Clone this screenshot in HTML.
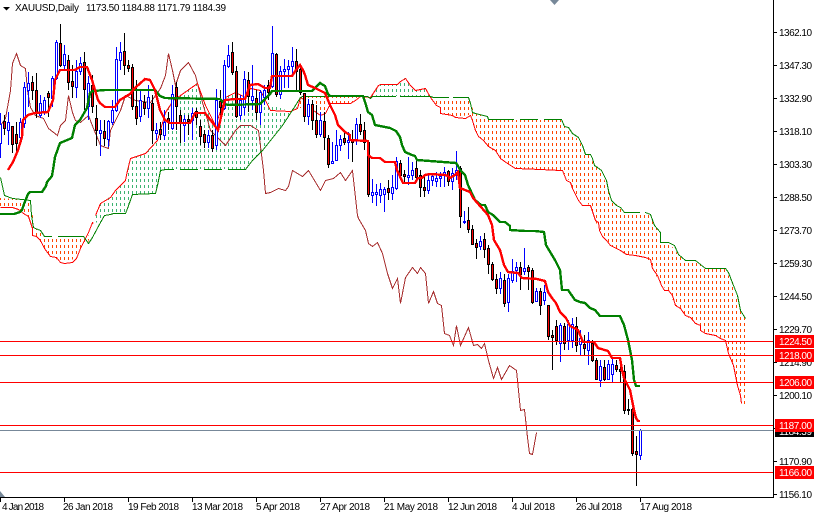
<!DOCTYPE html>
<html><head><meta charset="utf-8"><style>
html,body{margin:0;padding:0;background:#fff;width:814px;height:514px;overflow:hidden}
svg{display:block}
text{font-family:"Liberation Sans",sans-serif;font-size:10px;fill:#000}
.l{fill:none;shape-rendering:crispEdges}
.w{fill:#fff}
</style></head><body>
<svg width="814" height="514" viewBox="0 0 814 514" xmlns="http://www.w3.org/2000/svg">
<defs>
<pattern id="po" x="0" y="5" width="4" height="6" patternUnits="userSpaceOnUse"><rect x="0" y="0" width="1" height="3" fill="#ff4500"/></pattern>
<pattern id="pg" x="0" y="5" width="4" height="6" patternUnits="userSpaceOnUse"><rect x="0" y="0" width="1" height="3" fill="#3cb371"/></pattern>
</defs>
<rect width="814" height="514" fill="#fff"/>
<g shape-rendering="crispEdges">
<path fill="url(#po)" d="M0 198L30 200L35 228L44 236L83 236L88 243L93 223L88 237L76 258L64 263L50 256L44 248L36 236L32 228L28 216L18 209L0 207Z"/>
<path fill="url(#pg)" d="M93 223L95 215L100 203L110 197L125 180L127 170L130 158L145 153L157 140L165 112L173 100L197 83L205 105L215 125L225 97L235 92L245 97L250 88L260 90L270 105L290 111L297 108L295 105L282 125L270 140L262 150L248 165L245 169L165 169L160 170L157 185L155 193L132 194L127 208L125 213L110 214L104 215L100 222Z"/>
<path fill="url(#po)" d="M297 108L300 97L360 96L363 96L350 103L330 103L325 113L320 115L313 110L300 108Z"/>
<path fill="url(#pg)" d="M370 97L378 85L397 84L405 78L415 90L425 88L430 96L385 96Z"/>
<path fill="url(#po)" d="M433 97L468 97L470 103L475 113L487 116L488 119L561 119L564 126L572 133L582 145L585 154L590 154L594 165L601 170L608 190L611 200L620 207L624 212L645 212L650 214L654 225L660 232L660 242L668 242L678 254L685 260L695 260L705 268L725 268L733 285L740 310L745 318L745 405L741 403L737 385L733 365L725 340L715 335L705 333L695 323L685 315L675 305L668 290L661 285L652 268L645 257L626 254L610 245L599 230L595 220L590 205L578 200L570 182L562 170L515 168L500 158L488 146L478 136L470 115L455 117L440 113L440 107L436 105Z"/>
</g>
<g class="l" shape-rendering="crispEdges" transform="translate(.5 .5)">
<polyline fill="none" stroke="#a52a2a" stroke-width="1" points="0,125 5,118 10,90 12,63 16,53 20,65 25,68 27,90 30,107 35,115 43,118 48,128 57,135 60,125 65,120 68,95 72,112 75,120 80,122 88,115 93,128 98,140 100,145 108,148 110,130 115,120 120,110 125,95 135,100 150,102 155,95 160,88 165,75 168,53 172,70 175,85 180,70 188,62 195,75 200,95 210,130 220,140 225,145 235,130 240,125 250,125 258,130 263,170 265,193 270,192 278,188 285,190 288,186 292,170 297,173 302,176 308,170 320,190 325,180 333,178 340,172 345,180 352,170 355,197 357,215 358,218 365,230 368,243 372,246 377,242 382,253 387,273 392,288 397,278 400,303 405,277 412,267 417,273 420,267 425,273 428,303 433,291 437,303 441,305 444,333 449,335 453,345 456,325 460,345 468,327 473,345 477,344 481,348 484,343 488,360 493,378 497,367 501,379 509,365 516,370 518,390 520,410 524,409 527,437 529,453 532,454 536,432"/>
<polyline fill="none" stroke="#ff0000" stroke-width="1" points="0,207 12,207 18,209 23,213 28,216 30,222 32,228 32,235 36,236 40,240 44,248 50,256 56,257 60,262 64,263 72,262 76,258 80,248 84,240 88,232 92,222 93,223"/>
<polyline fill="none" stroke="#ff0000" stroke-width="1" points="95,215 100,203 105,200 110,197 115,190 120,185 125,180 127,170 130,158 145,153 157,140 165,112 173,100 197,83 205,105 215,125 225,97 235,92 245,97 250,88 260,90 270,110 290,111 297,108 300,97 305,100"/>
<polyline fill="none" stroke="#ff0000" stroke-width="1" points="313,110 320,115 325,113 330,103 350,103 355,100 360,96 370,97 378,85 380,84 397,84 400,81 405,78 410,85 415,90 425,88 430,97 436,105 440,107 440,113 452,115 455,117 465,118 470,115 472,120 475,130 478,136 483,140 488,146 495,150 500,158 507,163 515,168 540,169 560,170 562,170 566,180 570,182 572,188 578,200 582,205 590,205 595,220 598,222 599,230 602,236 606,240 610,245 620,250 626,254 635,255 645,257 650,259 652,268 657,275 661,285 664,290 668,290 672,295 675,305 680,308 685,315 690,317 695,323 700,325 700,330 705,333 715,335 720,338 725,340 728,353 733,365 735,375 737,385 740,395 741,403"/>
<polyline fill="none" stroke="#008000" stroke-width="1" points="0,177 4,195 12,198 30,200 31,215 33,227 35,228 40,230 44,236 83,236 88,243 92,237 93,235 100,222 104,215 110,214 113,213 125,213 127,208 132,194 155,193 157,185 160,170 165,169 245,169 248,165 252,160 262,150 270,140 282,125 295,105 300,97 302,96 360,96 367,96 370,98 372,96 430,96 433,97 468,97 470,103 472,112 475,113 487,116 488,119 561,119 564,126 568,127 572,133 578,137 582,145 585,154 590,154 592,158 594,165 597,167 601,170 606,180 608,190 611,200 616,205 620,207 624,212 645,212 650,214 654,225 660,232 660,242 668,242 674,245 678,254 685,260 695,260 705,268 725,268 728,272 733,285 737,295 740,310 745,318"/>
</g>
<path fill="#fff" shape-rendering="crispEdges" d="M174 169h6v1h-6zM198 169h6v1h-6zM222 169h6v1h-6zM514 119h6v1h-6zM538 119h6v1h-6zM640 212h5v1h-5zM52 236h6v1h-6zM396 96h4v1h-4zM449 97h4v1h-4zM700 268h4v1h-4z"/>
<path fill="none" stroke="#0000ff" shape-rendering="crispEdges" d="M0.5 113V158M8.5 112V145M20.5 118V140M24.5 82V128M28.5 72V107M40.5 95V118M44.5 97V115M52.5 76V107M56.5 40V80M64.5 45V70M76.5 60V98M80.5 57V75M88.5 76V120M100.5 120V156M108.5 120V147M112.5 100V125M116.5 47V112M120.5 42V70M140.5 90V122M148.5 85V118M156.5 123V140M164.5 110V140M172.5 85V130M184.5 115V142M192.5 108V140M208.5 130V148M216.5 89V150M224.5 60V110M228.5 45V68M240.5 95V120M244.5 71V115M252.5 65V110M260.5 90V125M264.5 85V105M272.5 26V88M280.5 66V99M284.5 59V88M288.5 60V88M292.5 47V75M308.5 99V125M320.5 112V137M332.5 142V164M336.5 130V161M340.5 135V151M348.5 132V159M356.5 118V145M372.5 179V203M376.5 184V206M380.5 183V203M384.5 187V212M392.5 175V200M396.5 157V190M408.5 157V185M412.5 162V180M428.5 174V194M432.5 175V186M436.5 172V187M440.5 172V187M444.5 167V187M452.5 168V190M456.5 151V180M464.5 211V224M480.5 236V250M500.5 272V294M508.5 274V312M512.5 259V283M516.5 262V282M524.5 248V275M536.5 288V302M544.5 285V305M560.5 323V362M568.5 320V350M572.5 318V348M580.5 330V356M588.5 332V365M600.5 360V387M608.5 360V380M612.5 358V382M640.5 429V460"/>
<path fill="#fff" stroke="#0000ff" shape-rendering="crispEdges" d="M-.5 124.5h2V143.5h-2zM7.5 122.5h2V130.5h-2zM19.5 122.5h2V137.5h-2zM23.5 87.5h2V123.5h-2zM27.5 83.5h2V90.5h-2zM39.5 103.5h2V115.5h-2zM43.5 100.5h2V112.5h-2zM51.5 78.5h2V98.5h-2zM55.5 42.5h2V78.5h-2zM63.5 54.5h2V65.5h-2zM75.5 71.5h2V87.5h-2zM79.5 63.5h2V71.5h-2zM87.5 83.5h2V106.5h-2zM99.5 130.5h2V133.5h-2zM107.5 121.5h2V139.5h-2zM111.5 110.5h2V122.5h-2zM115.5 59.5h2V110.5h-2zM119.5 52.5h2V60.5h-2zM139.5 100.5h2V116.5h-2zM147.5 97.5h2V108.5h-2zM155.5 130.5h2V133.5h-2zM163.5 122.5h2V135.5h-2zM171.5 94.5h2V128.5h-2zM183.5 119.5h2V125.5h-2zM191.5 113.5h2V120.5h-2zM207.5 135.5h2V142.5h-2zM215.5 100.5h2V145.5h-2zM223.5 65.5h2V108.5h-2zM227.5 55.5h2V66.5h-2zM239.5 100.5h2V115.5h-2zM243.5 79.5h2V107.5h-2zM251.5 96.5h2V100.5h-2zM259.5 92.5h2V112.5h-2zM263.5 90.5h2V97.5h-2zM271.5 53.5h2V86.5h-2zM279.5 71.5h2V94.5h-2zM283.5 69.5h2V71.5h-2zM287.5 66.5h2V69.5h-2zM291.5 61.5h2V66.5h-2zM307.5 104.5h2V116.5h-2zM319.5 120.5h2V134.5h-2zM331.5 161.5h2V163.5h-2zM335.5 145.5h2V160.5h-2zM339.5 139.5h2V145.5h-2zM347.5 140.5h2V142.5h-2zM355.5 124.5h2V140.5h-2zM371.5 192.5h2V195.5h-2zM375.5 192.5h2V194.5h-2zM379.5 189.5h2V195.5h-2zM383.5 189.5h2V194.5h-2zM391.5 187.5h2V193.5h-2zM395.5 161.5h2V188.5h-2zM407.5 175.5h2V177.5h-2zM411.5 170.5h2V175.5h-2zM427.5 180.5h2V190.5h-2zM431.5 176.5h2V180.5h-2zM435.5 178.5h2V181.5h-2zM439.5 176.5h2V178.5h-2zM443.5 172.5h2V174.5h-2zM451.5 173.5h2V181.5h-2zM455.5 170.5h2V173.5h-2zM463.5 221.5h2V222.5h-2zM479.5 241.5h2V246.5h-2zM499.5 278.5h2V288.5h-2zM507.5 278.5h2V302.5h-2zM511.5 271.5h2V280.5h-2zM515.5 267.5h2V270.5h-2zM523.5 268.5h2V271.5h-2zM535.5 291.5h2V301.5h-2zM543.5 292.5h2V300.5h-2zM559.5 325.5h2V343.5h-2zM567.5 324.5h2V340.5h-2zM571.5 324.5h2V340.5h-2zM579.5 338.5h2V344.5h-2zM587.5 340.5h2V350.5h-2zM599.5 366.5h2V380.5h-2zM607.5 364.5h2V379.5h-2zM611.5 364.5h2V374.5h-2zM639.5 430.5h2V455.5h-2z"/>
<path fill="none" stroke="#000" shape-rendering="crispEdges" d="M4.5 115V135M12.5 126V153M16.5 122V155M32.5 76V100M36.5 73V118M48.5 91V117M60.5 24V67M68.5 55V90M72.5 65V98M84.5 52V110M92.5 75V113M96.5 105V146M104.5 120V146M124.5 33V75M128.5 60V72M132.5 64V110M136.5 80V125M144.5 95V115M152.5 95V144M160.5 122V140M168.5 112V130M176.5 82V130M180.5 110V143M188.5 115V135M196.5 108V125M200.5 120V145M204.5 130V148M212.5 130V152M220.5 90V120M232.5 42V75M236.5 66V118M248.5 72V112M256.5 90V120M268.5 80V100M276.5 53V97M296.5 49V91M300.5 65V95M304.5 93V122M312.5 100V130M316.5 105V138M324.5 112V150M328.5 135V168M344.5 130V145M352.5 130V162M360.5 114V135M364.5 122V150M368.5 141V197M388.5 180V200M400.5 160V180M404.5 170V182M416.5 160V181M420.5 170V197M424.5 175V197M448.5 170V186M460.5 166V228M468.5 207V233M472.5 225V245M476.5 239V259M484.5 233V258M488.5 245V274M492.5 262V281M496.5 274V294M504.5 274V307M520.5 262V290M528.5 265V290M532.5 268V304M540.5 288V315M548.5 305V340M552.5 330V370M556.5 320V345M564.5 323V350M576.5 317V352M584.5 335V355M592.5 340V362M596.5 358V380M604.5 360V381M616.5 360V372M620.5 362V383M624.5 365V414M628.5 399V415M632.5 408V456M636.5 436V486"/>
<path fill="#ff0000" stroke="#000" shape-rendering="crispEdges" d="M3.500 121.500h2V128.500h-2zM11.500 126.500h2V144.500h-2zM15.500 134.500h2V143.500h-2zM31.500 82.500h2V90.500h-2zM35.500 90.500h2V112.500h-2zM47.500 93.500h2V97.500h-2zM59.500 43.500h2V65.500h-2zM67.500 60.500h2V82.500h-2zM71.500 81.500h2V86.500h-2zM83.500 62.500h2V89.500h-2zM91.500 85.500h2V106.500h-2zM95.500 118.500h2V130.500h-2zM103.500 131.500h2V138.500h-2zM123.500 51.500h2V65.500h-2zM127.500 65.500h2V68.500h-2zM131.500 67.500h2V106.500h-2zM135.500 106.500h2V118.500h-2zM143.500 102.500h2V108.500h-2zM151.500 103.500h2V130.500h-2zM159.500 129.500h2V134.500h-2zM167.500 118.500h2V122.500h-2zM175.500 87.500h2V106.500h-2zM179.500 115.500h2V123.500h-2zM187.500 119.500h2V121.500h-2zM195.500 111.500h2V117.500h-2zM199.500 126.500h2V136.500h-2zM203.500 134.500h2V142.500h-2zM211.500 135.500h2V148.500h-2zM219.500 101.500h2V107.500h-2zM231.500 52.500h2V72.500h-2zM235.500 71.500h2V116.500h-2zM247.500 80.500h2V96.500h-2zM255.500 98.500h2V112.500h-2zM267.500 85.500h2V92.500h-2zM275.500 54.500h2V94.500h-2zM295.500 61.500h2V71.500h-2zM299.500 69.500h2V92.500h-2zM303.500 93.500h2V116.500h-2zM311.500 104.500h2V120.500h-2zM315.500 120.500h2V134.500h-2zM323.500 121.500h2V137.500h-2zM327.500 138.500h2V164.500h-2zM343.500 138.500h2V142.500h-2zM351.500 139.500h2V142.500h-2zM359.500 124.500h2V131.500h-2zM363.500 130.500h2V142.500h-2zM367.500 142.500h2V194.500h-2zM387.500 188.500h2V192.500h-2zM399.500 163.500h2V175.500h-2zM403.500 174.500h2V176.500h-2zM415.500 168.500h2V177.500h-2zM419.500 175.500h2V187.500h-2zM423.500 187.500h2V190.500h-2zM447.500 171.500h2V181.500h-2zM459.500 168.500h2V216.500h-2zM467.500 220.500h2V229.500h-2zM471.500 229.500h2V244.500h-2zM475.500 243.500h2V247.500h-2zM483.500 239.500h2V249.500h-2zM487.500 248.500h2V264.500h-2zM491.500 264.500h2V279.500h-2zM495.500 279.500h2V288.500h-2zM503.500 280.500h2V303.500h-2zM519.500 267.500h2V274.500h-2zM527.500 267.500h2V271.500h-2zM531.500 270.500h2V302.500h-2zM539.500 291.500h2V305.500h-2zM547.500 305.500h2V336.500h-2zM551.500 335.500h2V337.500h-2zM555.500 326.500h2V340.500h-2zM563.500 326.500h2V343.500h-2zM575.500 326.500h2V345.500h-2zM583.500 344.500h2V348.500h-2zM591.500 343.500h2V360.500h-2zM595.500 360.500h2V379.500h-2zM603.500 367.500h2V379.500h-2zM615.500 365.500h2V369.500h-2zM619.500 369.500h2V371.500h-2zM623.500 371.500h2V410.500h-2zM627.500 409.500h2V410.500h-2zM631.500 409.500h2V453.500h-2zM635.500 451.500h2V454.500h-2z"/>
<g class="l" shape-rendering="crispEdges">
<polyline fill="none" stroke="#008000" stroke-width="2.4" points="0,214 14,214 20,212 22,210 24,204 28,194 30,192 42,192 46,186 47,182 52,176 53,170 55,157 60,143 72,138 75,125 80,120 87,108 90,93 93,91 105,90 155,90 160,96 165,98 220,99 225,104 228,105 260,104 270,94 272,91 312,91 316,87 320,83 325,86 328,94 330,96 363,96 366,105 368,112 372,115 375,125 390,128 396,131 400,137 402,145 405,152 412,155 415,156 417,160 456,163 458,166 460,170 465,175 468,185 475,200 481,205 485,205 488,212 493,215 500,222 505,222 510,226 510,230 525,231 535,231 544,232 546,245 552,255 555,260 560,270 562,290 568,290 575,300 580,302 585,303 590,308 595,310 600,316 620,316 624,325 628,340 632,360 634,380 636,386 640,386"/>
<polyline fill="none" stroke="#ff0000" stroke-width="2.4" points="8,170 13,162 18,150 22,137 23,120 28,115 35,113 48,112 53,100 55,80 60,70 75,70 80,67 87,67 92,80 98,100 100,103 105,107 115,107 120,100 125,97 130,94 135,88 145,79 150,80 155,90 160,110 165,120 170,123 190,123 195,113 205,113 212,122 218,130 225,100 235,99 245,99 250,85 258,84 265,88 270,88 272,76 292,76 296,70 300,65 303,70 305,75 308,85 315,88 325,93 330,105 335,115 338,125 345,132 350,135 350,140 368,141 368,155 372,158 380,158 385,162 395,162 397,170 403,183 415,183 418,178 422,178 425,175 430,174 445,175 448,176 450,178 455,175 458,172 460,188 470,192 473,198 488,215 492,225 494,240 500,250 504,265 508,272 518,273 522,278 537,279 545,281 548,292 552,298 556,303 560,312 566,318 570,326 578,330 583,342 594,342 598,348 608,351 612,358 620,358 622,370 624,378 630,390 632,400 634,410 636,418 638,421 640,421"/>
</g>
<g shape-rendering="crispEdges">
<rect x="0" y="430" width="773" height="1" fill="#778899"/>
<rect x="0" y="341" width="773" height="1" fill="#f00"/>
<rect x="0" y="355" width="773" height="1" fill="#f00"/>
<rect x="0" y="382" width="773" height="1" fill="#f00"/>
<rect x="0" y="425" width="773" height="1" fill="#f00"/>
<rect x="0" y="472" width="773" height="1" fill="#f00"/>
<rect x="773" y="0" width="1" height="498" fill="#000"/>
<rect x="0" y="497" width="774" height="1" fill="#000"/>
<path stroke="#000" fill="none" d="M774 32.500h3M774 65.500h3M774 98.500h3M774 131.500h3M774 164.500h3M774 197.500h3M774 230.500h3M774 263.500h3M774 296.500h3M774 329.500h3M774 362.500h3M774 395.500h3M774 428.500h3M774 461.500h3M774 494.500h3M0.500 498v4M64.500 498v4M128.500 498v4M192.500 498v4M256.500 498v4M320.500 498v4M384.500 498v4M448.500 498v4M512.500 498v4M576.500 498v4M640.500 498v4"/>
</g>
<g>
<text x="779" y="36" textLength="33">1362.10</text>
<text x="779" y="69" textLength="33">1347.30</text>
<text x="779" y="102" textLength="33">1332.90</text>
<text x="779" y="135" textLength="33">1318.10</text>
<text x="779" y="168" textLength="33">1303.30</text>
<text x="779" y="201" textLength="33">1288.50</text>
<text x="779" y="234" textLength="33">1273.70</text>
<text x="779" y="267" textLength="33">1259.30</text>
<text x="779" y="300" textLength="33">1244.50</text>
<text x="779" y="333" textLength="33">1229.70</text>
<text x="779" y="366" textLength="33">1214.90</text>
<text x="779" y="399" textLength="33">1200.10</text>
<text x="779" y="465" textLength="33">1170.90</text>
<text x="779" y="498" textLength="33">1156.10</text>
</g>
<g shape-rendering="crispEdges">
<rect x="775" y="424" width="39" height="13" fill="#000"/>
<rect x="775" y="335" width="39" height="13" fill="#f00"/>
<rect x="775" y="349" width="39" height="13" fill="#f00"/>
<rect x="775" y="376" width="39" height="13" fill="#f00"/>
<rect x="775" y="466" width="39" height="13" fill="#f00"/>
</g>
<text x="779" y="435" textLength="33" style="fill:#fff">1184.39</text>
<rect x="775" y="419" width="39" height="13" fill="#f00" shape-rendering="crispEdges"/>
<text x="779" y="345" textLength="33" style="fill:#fff">1224.50</text>
<text x="779" y="359" textLength="33" style="fill:#fff">1218.00</text>
<text x="779" y="386" textLength="33" style="fill:#fff">1206.00</text>
<text x="779" y="429" textLength="33" style="fill:#fff">1187.00</text>
<text x="779" y="476" textLength="33" style="fill:#fff">1166.00</text>
<text x="2" y="510" textLength="42">4 Jan 2018</text>
<text x="63" y="510" textLength="50">26 Jan 2018</text>
<text x="128" y="510" textLength="51">19 Feb 2018</text>
<text x="192" y="510" textLength="51">13 Mar 2018</text>
<text x="256" y="510" textLength="44">5 Apr 2018</text>
<text x="320" y="510" textLength="50">27 Apr 2018</text>
<text x="384" y="510" textLength="54">21 May 2018</text>
<text x="448" y="510" textLength="49">12 Jun 2018</text>
<text x="512" y="510" textLength="43">4 Jul 2018</text>
<text x="576" y="510" textLength="46">26 Jul 2018</text>
<text x="640" y="510" textLength="52">17 Aug 2018</text>
<path d="M3 7h7l-3.500 3.500z" fill="#000"/>
<text x="15" y="11" textLength="64">XAUUSD,Daily</text>
<text x="86" y="11" textLength="140">1173.50 1184.88 1171.79 1184.39</text>
<path d="M550 0h9l-4.500 5z" fill="#778899"/>
<path d="M0 497V491L5 497z" fill="#778899"/>
</svg>
</body></html>
